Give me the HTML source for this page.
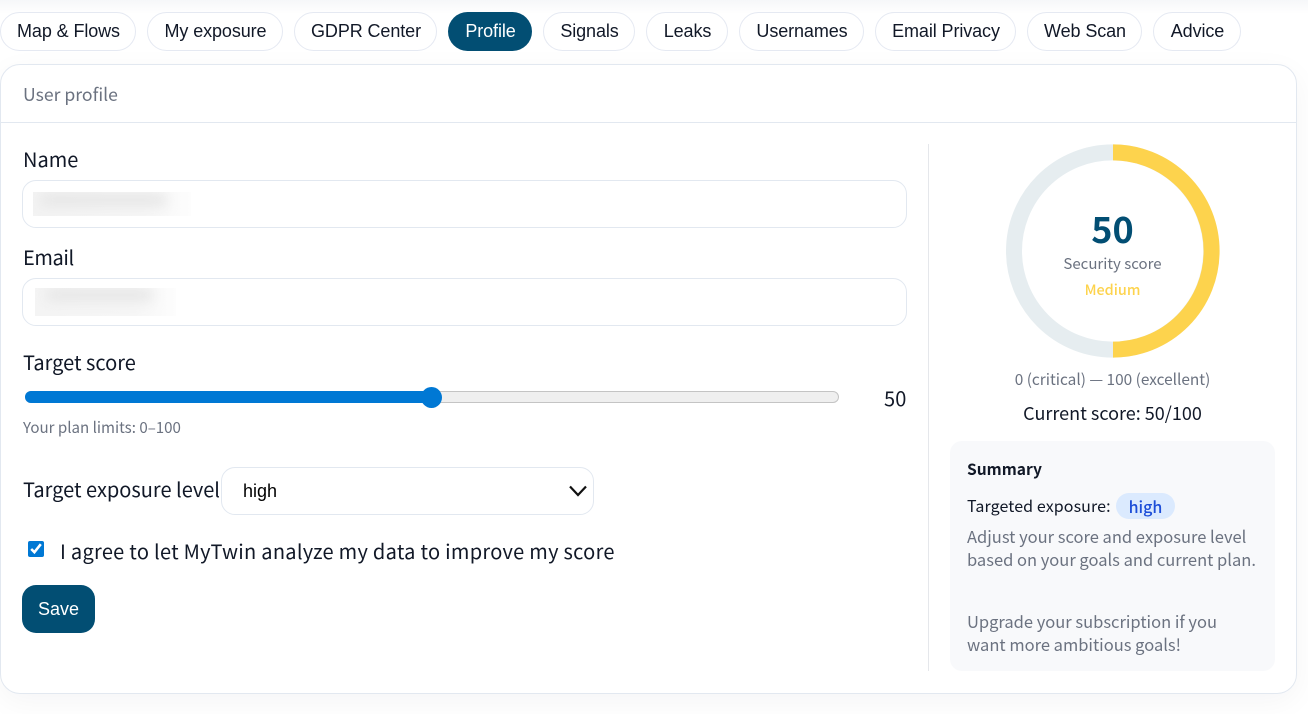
<!DOCTYPE html>
<html><head><meta charset="utf-8"><style>
html,body{margin:0;padding:0;width:1308px;height:714px;overflow:hidden;background:#fff}
body{position:relative;font-family:"Noto Sans CJK JP","Liberation Sans",sans-serif;color:#111827}
.t{position:absolute;white-space:nowrap;line-height:1}
.pill{position:absolute;top:12px;height:37px;border:1px solid #e5e9f2;border-radius:20px;background:#fff;font:18px/37px "Liberation Sans",sans-serif;color:#111827;text-align:center;letter-spacing:-.1px;text-indent:1px}
.card{position:absolute;left:0;top:64px;width:1295px;height:628px;border:1px solid #e2e8f0;border-radius:20px;background:#fff;box-shadow:0 8px 30px rgba(15,23,42,.045)}
.inp{position:absolute;border:1px solid #e2e8f0;border-radius:14px;background:#fff}
.blur{position:absolute;overflow:hidden}
.blur i{position:absolute;display:block;filter:blur(6px);background:#e6e6e6}
</style></head><body>
<div style="position:absolute;left:0;top:0;width:1308px;height:14px;background:linear-gradient(#f6f7f9,#fff)"></div>
<div class="card"></div>
<div class="pill" style="left:0;width:134px">Map &amp; Flows</div>
<div class="pill" style="left:147px;width:134px">My exposure</div>
<div class="pill" style="left:294px;width:141px">GDPR Center</div>
<div class="pill" style="left:448px;width:84px;height:39px;border:0;background:#024e73;color:#fff;line-height:39px">Profile</div>
<div class="pill" style="left:543px;width:90px">Signals</div>
<div class="pill" style="left:646px;width:80px">Leaks</div>
<div class="pill" style="left:739px;width:123px">Usernames</div>
<div class="pill" style="left:875px;width:139px">Email Privacy</div>
<div class="pill" style="left:1027px;width:113px">Web Scan</div>
<div class="pill" style="left:1153px;width:86px">Advice</div>

<div class="t" style="left:23px;top:86px;font-size:17.6px;color:#6b7280">User profile</div>
<div style="position:absolute;left:1px;top:122px;width:1295px;height:1px;background:#e2e8f0"></div>

<div class="t" style="left:23px;top:149px;font-size:20px">Name</div>
<div class="inp" style="left:22px;top:180px;width:883px;height:46px"></div>
<div class="blur" style="left:33px;top:192px;width:158px;height:24px;background:linear-gradient(90deg,#f3f3f3,#f6f6f6 70%,#fdfdfd)"><i style="left:8px;top:2px;width:125px;height:12px"></i></div>

<div class="t" style="left:23px;top:247px;font-size:20px;letter-spacing:-.4px">Email</div>
<div class="inp" style="left:22px;top:278px;width:883px;height:46px"></div>
<div class="blur" style="left:35px;top:288px;width:141px;height:28px;background:linear-gradient(90deg,#f4f4f4,#f6f6f6 70%,#fdfdfd)"><i style="left:12px;top:1px;width:105px;height:12px"></i></div>

<div class="t" style="left:23px;top:352px;font-size:20px">Target score</div>
<div style="position:absolute;left:25px;top:391px;width:812px;height:10px;border:1px solid #c4c4c4;border-radius:7px;background:#efefef"></div>
<div style="position:absolute;left:25px;top:391px;width:405px;height:12px;border-radius:6px;background:#0078d4"></div>
<div style="position:absolute;left:421px;top:386.5px;width:21px;height:21px;border-radius:50%;background:#0078d4"></div>
<div class="t" style="left:884px;top:388px;font-size:20px;letter-spacing:.2px">50</div>
<div class="t" style="left:23px;top:420px;font-size:15.1px;color:#6b7280">Your plan limits: 0–100</div>

<div class="t" style="left:23px;top:479px;font-size:20px">Target exposure level</div>
<div class="inp" style="left:221px;top:467px;width:371px;height:46px"></div>
<div class="t" style="left:243px;top:482px;font:18px/1 'Liberation Sans',sans-serif;color:#000">high</div>
<svg style="position:absolute;left:566px;top:482px" width="24" height="18" viewBox="0 0 24 18"><path d="M4 4.5 L12 13 L20 4.5" fill="none" stroke="#111" stroke-width="2.2"/></svg>

<input type="checkbox" checked style="position:absolute;left:28px;top:541px;width:16px;height:16px;margin:0;accent-color:#0078d4">
<div class="t" style="left:60px;top:541px;font-size:20px;letter-spacing:.28px">I agree to let MyTwin analyze my data to improve my score</div>
<div style="position:absolute;left:22px;top:585px;width:73px;height:48px;border-radius:14px;background:#024e73;color:#fff;font:18px/48px 'Liberation Sans',sans-serif;text-align:center">Save</div>

<div style="position:absolute;left:928px;top:144px;width:1px;height:527px;background:#e5e7eb"></div>
<svg style="position:absolute;left:1006px;top:144px" width="214" height="214" viewBox="0 0 214 214">
<circle cx="106.6" cy="107" r="98.6" fill="none" stroke="#e6edf0" stroke-width="16"/>
<path d="M107 8.4 A98.6 98.6 0 0 1 107 205.6" fill="none" stroke="#fdd34d" stroke-width="16"/></svg>
<div class="t" style="left:1006px;width:213px;text-align:center;top:210px;font-size:36px;font-weight:700;color:#024e73">50</div>
<div class="t" style="left:1006px;width:213px;text-align:center;top:256px;font-size:15px;color:#6b7280">Security score</div>
<div class="t" style="left:1006px;width:213px;text-align:center;top:283px;font-size:14.4px;font-weight:500;color:#fdd34d">Medium</div>
<div class="t" style="left:1006px;width:213px;text-align:center;top:372px;font-size:15.4px;color:#6b7280">0 (critical) — 100 (excellent)</div>
<div class="t" style="left:1006px;width:213px;text-align:center;top:404px;font-size:18px">Current score: 50/100</div>

<div style="position:absolute;left:950px;top:441px;width:325px;height:230px;border-radius:12px;background:#f8f9fb"></div>
<div class="t" style="left:967px;top:462px;font-size:15.6px;font-weight:700">Summary</div>
<div class="t" style="left:967px;top:497px;font-size:16px;letter-spacing:.1px">Targeted exposure:</div>
<div style="position:absolute;left:1116px;top:493px;width:59px;height:26px;border-radius:13px;background:#dbeafe"></div>
<div class="t" style="left:1116px;width:59px;text-align:center;top:498px;font-size:16px;font-weight:500;color:#1d4ed8">high</div>
<div class="t" style="left:967px;top:528px;font-size:16.5px;color:#6b7280">Adjust your score and exposure level</div>
<div class="t" style="left:967px;top:551px;font-size:16.5px;color:#6b7280">based on your goals and current plan.</div>
<div class="t" style="left:967px;top:613px;font-size:16.5px;color:#6b7280">Upgrade your subscription if you</div>
<div class="t" style="left:967px;top:636px;font-size:16.5px;color:#6b7280">want more ambitious goals!</div>
</body></html>
